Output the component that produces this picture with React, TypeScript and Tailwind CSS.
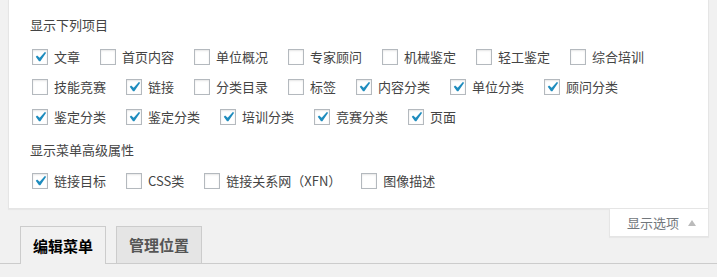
import React from "react";

type Item = { label: string; checked: boolean };

const rows1: Item[][] = [
  [
    { label: "文章", checked: true },
    { label: "首页内容", checked: false },
    { label: "单位概况", checked: false },
    { label: "专家顾问", checked: false },
    { label: "机械鉴定", checked: false },
    { label: "轻工鉴定", checked: false },
    { label: "综合培训", checked: false },
  ],
  [
    { label: "技能竞赛", checked: false },
    { label: "链接", checked: true },
    { label: "分类目录", checked: false },
    { label: "标签", checked: false },
    { label: "内容分类", checked: true },
    { label: "单位分类", checked: true },
    { label: "顾问分类", checked: true },
  ],
  [
    { label: "鉴定分类", checked: true },
    { label: "鉴定分类", checked: true },
    { label: "培训分类", checked: true },
    { label: "竞赛分类", checked: true },
    { label: "页面", checked: true },
  ],
];

const rows2: Item[] = [
  { label: "链接目标", checked: true },
  { label: "CSS类", checked: false },
  { label: "链接关系网（XFN）", checked: false },
  { label: "图像描述", checked: false },
];

function Box({ checked }: { checked: boolean }) {
  return (
    <span className="relative ml-[2px] w-4 h-4 shrink-0 bg-white border border-[#b4b9be] shadow-[inset_0_1px_2px_rgba(0,0,0,0.1)]">
      {checked && (
        <svg
          viewBox="0 0 20 20"
          className="absolute left-[-3px] top-[-3px] w-5 h-5"
          aria-hidden="true"
        >
          <path
            d="M14.83 4.89l1.34.94-5.81 8.38H9.02L5.78 9.67l1.34-1.25 2.57 2.4z"
            fill="#1e8cbe"
          />
        </svg>
      )}
    </span>
  );
}

function Check({ item }: { item: Item }) {
  return (
    <label className="flex items-center mr-[18px]">
      <Box checked={item.checked} />
      <span className="ml-[6px] text-[13px] leading-5 text-[#444]">{item.label}</span>
    </label>
  );
}

export default function App() {
  return (
    <div
      className="w-[717px] h-[277px] bg-[#f1f1f1] overflow-hidden"
      style={{ fontFamily: '"Noto Sans CJK SC", "Liberation Sans", sans-serif' }}
    >
      <div className="mx-2 bg-white border-x border-b border-[#e5e5e5] shadow-[0_1px_1px_rgba(0,0,0,0.04)] pl-[21px] pr-5 pt-[15px] pb-3">
        <div className="h-5 text-[13px] leading-5 text-[#444]">显示下列项目</div>
        <div className="mt-[7px]">
          {rows1.map((row, i) => (
            <div key={i} className="flex h-[30px] items-center">
              {row.map((it, j) => (
                <Check key={j} item={it} />
              ))}
            </div>
          ))}
        </div>
        <div className="mt-2 h-5 text-[13px] leading-5 text-[#444]">显示菜单高级属性</div>
        <div className="mt-[6px] flex h-[30px] items-center">
          {rows2.map((it, j) => (
            <Check key={j} item={it} />
          ))}
        </div>
      </div>

      <div className="flex justify-between border-b border-[#ccc]">
        <div className="flex items-end pl-5 pt-[17px]">
          <div className="h-[38px] -mb-px px-[12px] flex items-center border border-b-0 border-[#ccc] bg-[#f1f1f1] text-[15px] leading-5 font-bold text-[#000]">
            编辑菜单
          </div>
          <div className="ml-[10px] h-[37px] px-[12px] flex items-center border border-b-0 border-[#ccc] bg-[#e5e5e5] text-[15px] leading-5 font-bold text-[#555]">
            管理位置
          </div>
        </div>
        <div className="self-start mr-2 w-[100px] h-[28px] flex items-center pl-[17px] bg-white border-x border-b border-[#e5e5e5] shadow-[0_1px_1px_rgba(0,0,0,0.04)]">
          <span className="text-[13px] leading-5 text-[#72777c]">显示选项</span>
          <span className="ml-[9px] w-0 h-0 border-x-[4px] border-x-transparent border-b-[6px] border-b-[#bbb]" />
        </div>
      </div>
    </div>
  );
}
